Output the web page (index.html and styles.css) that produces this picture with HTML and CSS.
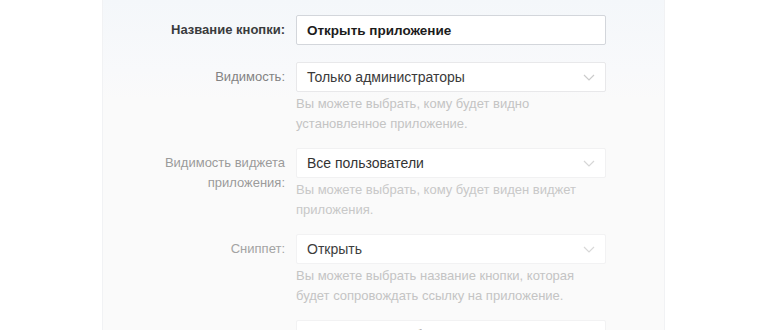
FILE: index.html
```html
<!DOCTYPE html>
<html lang="ru">
<head>
    <meta charset="UTF-8">
    <meta name="viewport" content="width=device-width, initial-scale=1.0">
    <title>Настройки приложения</title>
    <link rel="stylesheet" href="styles.css">
</head>
<body>
    <!-- Settings panel -->
    <section class="panel">
        <div class="row row-active">
            <label class="row-label">Название кнопки:</label>
            <div class="row-field">
                <div class="input">Открыть приложение</div>
            </div>
        </div>

        <div class="row row-2">
            <label class="row-label">Видимость:</label>
            <div class="row-field">
                <div class="input select">
                    <span>Только администраторы</span>
                    <svg class="chevron" width="12" height="7" viewBox="0 0 12 7"><path d="M1 1l5 5 5-5" fill="none" stroke="currentColor" stroke-width="1.2"/></svg>
                </div>
                <p class="hint">Вы можете выбрать, кому будет видно установленное приложение.</p>
            </div>
        </div>

        <div class="row row-3">
            <label class="row-label">Видимость виджета приложения:</label>
            <div class="row-field">
                <div class="input select">
                    <span>Все пользователи</span>
                    <svg class="chevron" width="12" height="7" viewBox="0 0 12 7"><path d="M1 1l5 5 5-5" fill="none" stroke="currentColor" stroke-width="1.2"/></svg>
                </div>
                <p class="hint">Вы можете выбрать, кому будет виден виджет приложения.</p>
            </div>
        </div>

        <div class="row row-4">
            <label class="row-label">Сниппет:</label>
            <div class="row-field">
                <div class="input select">
                    <span>Открыть</span>
                    <svg class="chevron" width="12" height="7" viewBox="0 0 12 7"><path d="M1 1l5 5 5-5" fill="none" stroke="currentColor" stroke-width="1.2"/></svg>
                </div>
                <p class="hint">Вы можете выбрать название кнопки, которая будет сопровождать ссылку на приложение.</p>
            </div>
        </div>

        <div class="row row-5">
            <label class="row-label">Текст кнопки виджета:</label>
            <div class="row-field">
                <div class="input">Вступить в сообщество</div>
            </div>
        </div>
    </section>
</body>
</html>
```

FILE: styles.css
```css
body {
    margin: 0;
    padding: 0;
    background-color: #fff;
    font-family: "Liberation Sans", Arial, sans-serif;
    font-size: 13px;
    color: #333;
    height: 330px;
    overflow: hidden;
}

/* Panel */
.panel {
    margin-left: 102px;
    width: 563px;
    height: 330px;
    padding-top: 15px;
    box-sizing: border-box;
    border-left: 1px solid #f1f2f4;
    border-right: 1px solid #f1f2f4;
    background: linear-gradient(#f4f7fa 0, #f8f9fb 70px, #fafafa 100px, #fafafa 100%);
}

/* Rows */
.row {
    display: grid;
    grid-template-columns: 152px 310px;
    column-gap: 11px;
    padding-left: 30px;
    margin-bottom: 14px;
}

.row-active {
    margin-bottom: 17px;
}

.row-label {
    text-align: right;
    padding-top: 5px;
    line-height: 20px;
}

.input {
    display: flex;
    align-items: center;
    justify-content: space-between;
    height: 30px;
    box-sizing: border-box;
    padding: 0 10px;
    background: #fff;
    border: 1px solid #e6e7e9;
    border-radius: 2px;
    font-size: 14px;
}

.chevron {
    color: #cbcbcb;
}

.hint {
    margin: 2px 0 0;
    line-height: 20px;
    color: #c4c4c4;
}

/* Fading from the focused row down */
.row-active .row-label {
    color: #3a3b3d;
    font-weight: bold;
}

.row-active .input {
    border-color: #d3d6db;
    color: #1c1c1c;
    font-weight: bold;
    font-size: 13.5px;
}

.row-2 .row-label { color: #828282; }
.row-2 .input { border-color: #e8e8ea; color: #3a3a3a; }

.row-3 .row-label { color: #9b9b9b; }
.row-3 .input { border-color: #f1f1f2; color: #333; }
.row-3 .chevron { color: #d6d6d6; }
.row-3 .hint { color: #c8c8c8; }

.row-4 .row-label { color: #a3a3a3; }
.row-4 .input { border-color: #f2f2f3; color: #3d3d3d; }
.row-4 .chevron { color: #d8d8d8; }

.row-5 .row-label { color: #adadad; }
.row-5 .input { border-color: #f2f2f3; color: #333; font-weight: bold; }
```
